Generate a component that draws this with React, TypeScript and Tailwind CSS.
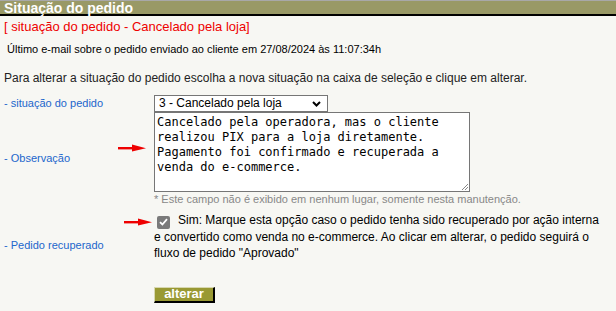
function Arrow() {
  return (
    <svg width="28" height="8" viewBox="0 0 28 8" className="block">
      <rect x="0" y="3" width="16" height="2.4" fill="#ee0000" />
      <polygon points="14,0.5 28,4.2 14,7.5" fill="#ee0000" />
    </svg>
  );
}

export default function App() {
  return (
    <div className="w-[616px] h-[311px] bg-[#f7f7f3] font-['Liberation_Sans',Arial,sans-serif] text-black overflow-hidden">
      <div className="border-t border-[#a8a8a8] bg-[#999966] border-b-2 border-b-black h-[16px] pl-[4px] text-white font-bold text-[14px] leading-[15px]">
        Situação do pedido
      </div>

      <div className="pl-[4px] pt-[3px] text-[#ee0000] text-[13px] leading-[16px]">
        [ situação do pedido - Cancelado pela loja]
      </div>

      <div className="pl-[7px] pt-[8px] text-[11px] leading-[13px]">
        Último e-mail sobre o pedido enviado ao cliente em 27/08/2024 às 11:07:34h
      </div>

      <div className="pl-[4px] pt-[15px] text-[12px] leading-[14px] text-[#222]">
        Para alterar a situação do pedido escolha a nova situação na caixa de seleção e clique em alterar.
      </div>

      <div className="grid grid-cols-[150px_1fr] pl-[4px] pt-[10px] text-[11px]">
        <div className="flex items-center h-[17px] text-[#2266cc]">- situação do pedido</div>
        <div className="h-[17px]">
          <div className="w-[174px] h-[17px] bg-white border border-[#767676] flex items-center justify-between pl-[4px] pr-[6px] text-[12px] leading-[15px]">
            <span>3 - Cancelado pela loja</span>
            <svg width="9" height="6" viewBox="0 0 9 6">
              <path d="M1 1 L4.5 4.5 L8 1" stroke="#000" strokeWidth="2" fill="none" />
            </svg>
          </div>
        </div>

        <div className="relative flex items-center h-[93px] text-[#2266cc]">
          - Observação
          <div className="absolute left-[114px] top-[32px]">
            <Arrow />
          </div>
        </div>
        <div className="h-[93px]">
          <div className="relative w-[316px] h-[80px] bg-white border border-[#767676] pl-[2px] pt-[2px] font-['DejaVu_Sans_Mono',monospace] text-[12px] leading-[15px] whitespace-pre">
            {"Cancelado pela operadora, mas o cliente\nrealizou PIX para a loja diretamente.\nPagamento foi confirmado e recuperada a\nvenda do e-commerce."}
            <svg width="7" height="7" viewBox="0 0 7 7" className="absolute right-[1px] bottom-[1px]">
              <path d="M1 7 L7 1 M4 7 L7 4" stroke="#888" strokeWidth="1" />
            </svg>
          </div>
          <div className="text-[11px] leading-[13px] text-[#888] pt-[1px]">
            * Este campo não é exibido em nenhum lugar, somente nesta manutenção.
          </div>
        </div>

        <div className="relative flex items-center h-[76px] text-[#2266cc] pt-[4px]">
          - Pedido recuperado
          <div className="absolute left-[120px] top-[13px]">
            <Arrow />
          </div>
        </div>
        <div className="h-[76px] pr-[8px] pt-[7px] text-[12px] leading-[16px]">
          <span className="inline-flex align-[-2px] w-[13px] h-[13px] ml-[3px] mr-[8px] rounded-[2px] bg-[#7a7a7a] items-center justify-center">
            <svg width="9" height="8" viewBox="0 0 9 8">
              <path d="M1 4.2 L3.4 6.5 L8 1.2" stroke="#fff" strokeWidth="1.8" fill="none" />
            </svg>
          </span>
          Sim: Marque esta opção caso o pedido tenha sido recuperado por ação interna e convertido como venda no e-commerce. Ao clicar em alterar, o pedido seguirá o fluxo de pedido "Aprovado"
        </div>

        <div />
        <div className="pt-[5px]">
          <button className="w-[61px] h-[16px] bg-[#999933] text-white font-bold text-[13px] leading-[12px] border border-t-[#d8d8b0] border-l-[#d8d8b0] border-r-black border-b-black border-r-2 border-b-2">
            alterar
          </button>
        </div>
      </div>
    </div>
  );
}
